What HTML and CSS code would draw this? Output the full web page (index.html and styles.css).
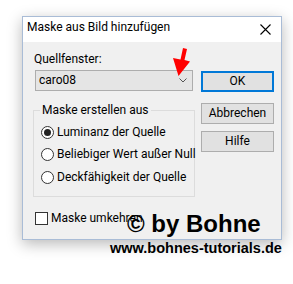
FILE: index.html
```html
<!DOCTYPE html>
<html>
<head>
<meta charset="utf-8">
<link rel="stylesheet" href="styles.css">
</head>
<body>
<div class="dialog">
  <div class="titlebar">
    <span class="title">Maske aus Bild hinzufügen</span>
    <svg class="close" width="11" height="11" viewBox="0 0 11 11"><path d="M0.5 0.5L10.5 10.5M10.5 0.5L0.5 10.5" stroke="#000" stroke-width="1.1" fill="none"/></svg>
  </div>
  <div class="content">
    <div class="left">
      <div class="label">Quellfenster:</div>
      <div class="combo">
        <span>caro08</span>
        <svg class="chev" width="8" height="5" viewBox="0 0 8 5"><path d="M0.5 0.5L4 4L7.5 0.5" stroke="#555" stroke-width="1" fill="none"/></svg>
      </div>
      <fieldset class="group">
        <legend>Maske erstellen aus</legend>
        <div class="opt"><span class="radio checked"></span><span>Luminanz der Quelle</span></div>
        <div class="opt"><span class="radio"></span><span>Beliebiger Wert außer Null</span></div>
        <div class="opt"><span class="radio"></span><span>Deckfähigkeit der Quelle</span></div>
      </fieldset>
      <div class="check"><span class="box"></span><span>Maske umkehren</span></div>
    </div>
    <div class="right">
      <div class="btn default">OK</div>
      <div class="btn b2">Abbrechen</div>
      <div class="btn b3">Hilfe</div>
    </div>
  </div>
</div>
<svg class="arrow" width="30" height="36" viewBox="0 0 30 36"><path d="M13 2L17 3L14.5 14L20 15.5L8.5 30L3 12L10.5 13.5Z" fill="#ff0000"/></svg>
<div class="wm1">© by Bohne</div>
<div class="wm2">www.bohnes-tutorials.de</div>
</body>
</html>
```
FILE: styles.css
```css
html, body {
  margin: 0;
  padding: 0;
}
body {
  width: 293px;
  height: 284px;
  background: #fff;
  position: relative;
  overflow: hidden;
  font-family: Roboto, "Noto Sans", sans-serif;
  font-size: 12px;
  color: #000;
}
.dialog {
  margin: 16px 0 0 22px;
  width: 260px;
  height: 224px;
  box-sizing: border-box;
  border: 1px solid #a9bcd6;
  background: #f0f0f0;
  box-shadow: 0 4px 14px rgba(0,0,0,0.28);
}
.titlebar {
  height: 25px;
  box-sizing: border-box;
  background: #fff;
  display: flex;
  align-items: flex-start;
  padding: 3px 0 0 4px;
  line-height: 15px;
  white-space: nowrap;
}
.close {
  margin-left: auto;
  margin-right: 10px;
  margin-top: 4px;
}
.content {
  display: flex;
  padding: 10px 0 0 10px;
  line-height: 15px;
  white-space: nowrap;
}
.left {
  width: 162px;
}
.label {
  margin-left: 1px;
  height: 15px;
  margin-bottom: 3px;
}
.combo {
  margin-left: 2px;
  width: 158px;
  height: 21px;
  box-sizing: border-box;
  border: 1px solid #adadad;
  background: #e5e5e5;
  display: flex;
  align-items: center;
  padding-left: 3px;
}
.chev {
  margin-left: auto;
  margin-right: 5px;
}
.group {
  margin: 12px 0 0 0;
  padding: 3px 0 7px 0;
  width: 162px;
  box-sizing: border-box;
  border: 1px solid #dcdcdc;
  min-width: 0;
}
.group legend {
  margin-left: 6px;
  padding: 0 2px;
  line-height: 15px;
}
.opt {
  height: 22.5px;
  display: flex;
  align-items: center;
  padding-left: 7px;
}
.radio {
  width: 13px;
  height: 13px;
  box-sizing: border-box;
  border: 1px solid #333;
  border-radius: 50%;
  background: #fff;
  margin-right: 3px;
  display: flex;
  align-items: center;
  justify-content: center;
  flex-shrink: 0;
}
.radio.checked::after {
  content: "";
  width: 7px;
  height: 7px;
  border-radius: 50%;
  background: #222;
}
.check {
  margin: 14px 0 0 2px;
  display: flex;
  align-items: center;
  height: 15px;
}
.box {
  width: 13px;
  height: 13px;
  box-sizing: border-box;
  border: 1px solid #333;
  background: #fff;
  margin-right: 3px;
  flex-shrink: 0;
}
.right {
  margin-left: 6px;
  padding-top: 19px;
  width: 73px;
}
.btn {
  height: 21px;
  box-sizing: border-box;
  border: 1px solid #adadad;
  background: #e1e1e1;
  display: flex;
  align-items: center;
  justify-content: center;
}
.btn.default {
  border: 2px solid #0078d7;
}
.b2 {
  margin-top: 11px;
}
.b3 {
  margin-top: 7px;
}
.arrow {
  position: absolute;
  left: 170px;
  top: 46px;
}
.wm1 {
  position: absolute;
  left: 127px;
  top: 212px;
  font-family: "Liberation Sans", Arial, sans-serif;
  font-weight: bold;
  font-size: 24px;
  line-height: 24px;
  white-space: nowrap;
}
.wm2 {
  position: absolute;
  left: 110px;
  top: 240px;
  font-family: "Liberation Sans", Arial, sans-serif;
  font-weight: bold;
  font-size: 14.5px;
  line-height: 16px;
  white-space: nowrap;
}
```
